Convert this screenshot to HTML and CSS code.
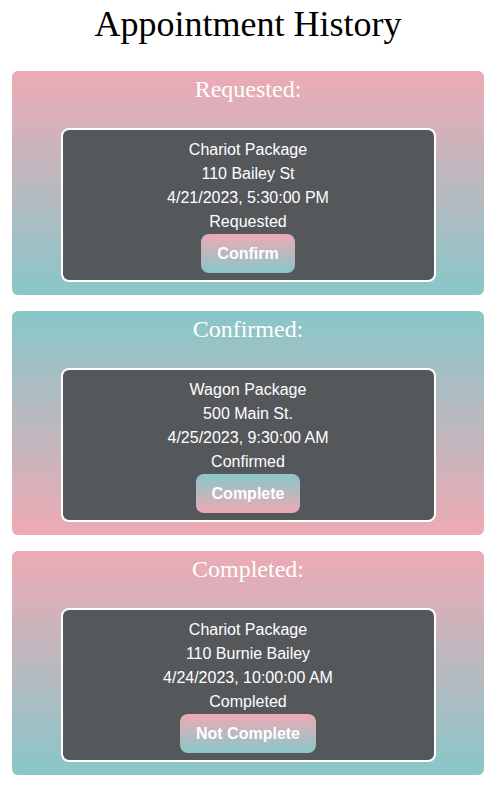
FILE: index.html
```html
<!DOCTYPE html>
<html lang="en">
<head>
<meta charset="utf-8">
<title>Appointment History</title>
<link rel="stylesheet" href="styles.css">
</head>
<body>
<h1 class="title">Appointment History</h1>
<main class="history">
  <section class="group group-pink">
    <h2 class="group-title">Requested:</h2>
    <div class="card">
      <div class="line">Chariot Package</div>
      <div class="line">110 Bailey St</div>
      <div class="line">4/21/2023, 5:30:00 PM</div>
      <div class="line">Requested</div>
      <button class="action action-pink">Confirm</button>
    </div>
  </section>
  <section class="group group-teal">
    <h2 class="group-title">Confirmed:</h2>
    <div class="card">
      <div class="line">Wagon Package</div>
      <div class="line">500 Main St.</div>
      <div class="line">4/25/2023, 9:30:00 AM</div>
      <div class="line">Confirmed</div>
      <button class="action action-teal">Complete</button>
    </div>
  </section>
  <section class="group group-pink">
    <h2 class="group-title">Completed:</h2>
    <div class="card">
      <div class="line">Chariot Package</div>
      <div class="line">110 Burnie Bailey</div>
      <div class="line">4/24/2023, 10:00:00 AM</div>
      <div class="line">Completed</div>
      <button class="action action-pink">Not Complete</button>
    </div>
  </section>
</main>
</body>
</html>
```
FILE: styles.css
```css
html, body {
  margin: 0;
  padding: 0;
  background: #ffffff;
}
body {
  padding: 4px 11px 0 12px;
  font-family: "Liberation Serif", "Times New Roman", serif;
}
.title {
  margin: 0 0 27px;
  font-size: 36px;
  line-height: 40px;
  font-weight: normal;
  text-align: center;
  color: #000000;
}
.history {
  display: flex;
  flex-direction: column;
  gap: 16px;
}
.group {
  border-radius: 6px;
  padding: 4px 0 13px;
  display: flex;
  flex-direction: column;
  align-items: center;
}
.group-pink {
  background: linear-gradient(to bottom, #eeaab4, #88c7c9);
}
.group-teal {
  background: linear-gradient(to bottom, #88c7c9, #eeaab4);
}
.group-title {
  margin: 0 0 25px;
  font-size: 24px;
  line-height: 28px;
  font-weight: normal;
  color: #ffffff;
}
.card {
  box-sizing: border-box;
  width: 375px;
  padding: 8px 8px 7px;
  border: 2px solid #ffffff;
  border-radius: 8px;
  background: #55585b;
  color: #ffffff;
  font-family: "Liberation Sans", Arial, sans-serif;
  font-size: 16px;
  line-height: 24px;
  display: flex;
  flex-direction: column;
  align-items: center;
}
.action {
  border: none;
  border-radius: 8px;
  padding: 10px 16px;
  height: 39px;
  color: #ffffff;
  font-family: "Liberation Sans", Arial, sans-serif;
  font-size: 16px;
  font-weight: bold;
  line-height: 19px;
}
.action-pink {
  background: linear-gradient(to bottom, #eeaab4, #88c7c9);
}
.action-teal {
  background: linear-gradient(to bottom, #88c7c9, #eeaab4);
}
```
